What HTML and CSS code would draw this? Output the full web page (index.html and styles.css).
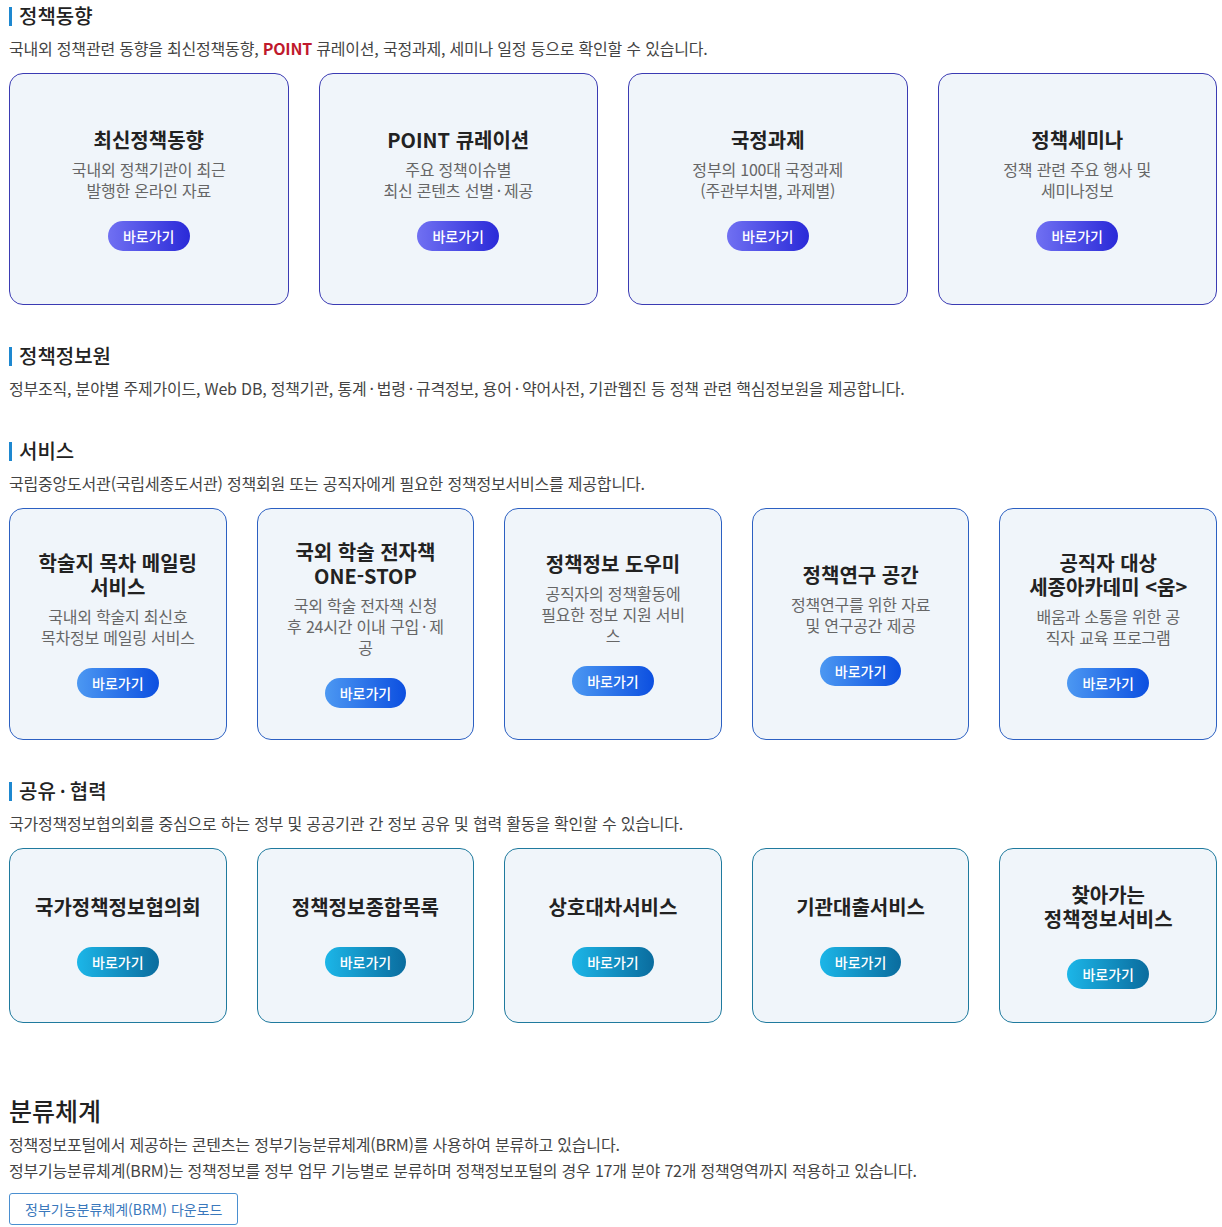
FILE: index.html
```html
<!DOCTYPE html>
<html lang="ko">
<head>
    <meta charset="UTF-8">
    <meta name="viewport" content="width=device-width, initial-scale=1">
    <title>정책정보</title>
    <link rel="stylesheet" href="styles.css">
</head>
<body>
    <div class="section">
        <h2 class="title">정책동향</h2>
        <p class="desc">국내외 정책관련 동향을 최신정책동향, <strong class="point">POINT</strong> 큐레이션, 국정과제, 세미나 일정 등으로 확인할 수 있습니다.</p>
        <ul class="cards cols-4 purple">
            <li class="card">
                <strong class="card-title">최신정책동향</strong>
                <p class="card-desc">국내외 정책기관이 최근<br>발행한 온라인 자료</p>
                <a href="#" class="go">바로가기</a>
            </li>
            <li class="card">
                <strong class="card-title">POINT 큐레이션</strong>
                <p class="card-desc">주요 정책이슈별<br>최신 콘텐츠 선별&#8201;·&#8201;제공</p>
                <a href="#" class="go">바로가기</a>
            </li>
            <li class="card">
                <strong class="card-title">국정과제</strong>
                <p class="card-desc">정부의 100대 국정과제<br>(주관부처별, 과제별)</p>
                <a href="#" class="go">바로가기</a>
            </li>
            <li class="card">
                <strong class="card-title">정책세미나</strong>
                <p class="card-desc">정책 관련 주요 행사 및<br>세미나정보</p>
                <a href="#" class="go">바로가기</a>
            </li>
        </ul>
    </div>

    <div class="section">
        <h2 class="title">정책정보원</h2>
        <p class="desc">정부조직, 분야별 주제가이드, Web DB, 정책기관, 통계&#8201;·&#8201;법령&#8201;·&#8201;규격정보, 용어&#8201;·&#8201;약어사전, 기관웹진 등 정책 관련 핵심정보원을 제공합니다.</p>
    </div>

    <div class="section">
        <h2 class="title">서비스</h2>
        <p class="desc">국립중앙도서관(국립세종도서관) 정책회원 또는 공직자에게 필요한 정책정보서비스를 제공합니다.</p>
        <ul class="cards cols-5 blue">
            <li class="card">
                <strong class="card-title">학술지 목차 메일링 서비스</strong>
                <p class="card-desc">국내외 학술지 최신호<br>목차정보 메일링 서비스</p>
                <a href="#" class="go">바로가기</a>
            </li>
            <li class="card">
                <strong class="card-title">국외 학술 전자책<br>ONE-STOP</strong>
                <p class="card-desc">국외 학술 전자책 신청<br>후 24시간 이내 구입&#8201;·&#8201;제<br>공</p>
                <a href="#" class="go">바로가기</a>
            </li>
            <li class="card">
                <strong class="card-title">정책정보 도우미</strong>
                <p class="card-desc">공직자의 정책활동에<br>필요한 정보 지원 서비<br>스</p>
                <a href="#" class="go">바로가기</a>
            </li>
            <li class="card">
                <strong class="card-title">정책연구 공간</strong>
                <p class="card-desc">정책연구를 위한 자료<br>및 연구공간 제공</p>
                <a href="#" class="go">바로가기</a>
            </li>
            <li class="card">
                <strong class="card-title">공직자 대상<br>세종아카데미 &lt;움&gt;</strong>
                <p class="card-desc">배움과 소통을 위한 공<br>직자 교육 프로그램</p>
                <a href="#" class="go">바로가기</a>
            </li>
        </ul>
    </div>

    <div class="section">
        <h2 class="title">공유&#8201;·&#8201;협력</h2>
        <p class="desc">국가정책정보협의회를 중심으로 하는 정부 및 공공기관 간 정보 공유 및 협력 활동을 확인할 수 있습니다.</p>
        <ul class="cards cols-5 teal short">
            <li class="card">
                <strong class="card-title">국가정책정보협의회</strong>
                <a href="#" class="go">바로가기</a>
            </li>
            <li class="card">
                <strong class="card-title">정책정보종합목록</strong>
                <a href="#" class="go">바로가기</a>
            </li>
            <li class="card">
                <strong class="card-title">상호대차서비스</strong>
                <a href="#" class="go">바로가기</a>
            </li>
            <li class="card">
                <strong class="card-title">기관대출서비스</strong>
                <a href="#" class="go">바로가기</a>
            </li>
            <li class="card">
                <strong class="card-title">찾아가는<br>정책정보서비스</strong>
                <a href="#" class="go">바로가기</a>
            </li>
        </ul>
    </div>

    <div class="brm">
        <h2 class="brm-title">분류체계</h2>
        <p class="brm-text">정책정보포털에서 제공하는 콘텐츠는 정부기능분류체계(BRM)를 사용하여 분류하고 있습니다.<br>정부기능분류체계(BRM)는 정책정보를 정부 업무 기능별로 분류하며 정책정보포털의 경우 17개 분야 72개 정책영역까지 적용하고 있습니다.</p>
        <a href="#" class="download">정부기능분류체계(BRM) 다운로드</a>
    </div>
</body>
</html>
```

FILE: styles.css
```css
*, *:before, *:after {
    margin: 0;
    padding: 0;
    box-sizing: border-box;
}
body {
    padding: 2px 5px 0 9px;
    font-family: "Noto Sans CJK KR", "Noto Sans", sans-serif;
    color: #222;
    background: #fff;
}
a {
    text-decoration: none;
}
ul {
    list-style: none;
}
.section {
    margin-bottom: 37px;
}
.title {
    position: relative;
    padding-left: 10px;
    font-size: 20px;
    font-weight: 500;
    line-height: 28px;
    color: #222;
}
.title:before {
    content: "";
    position: absolute;
    left: 0;
    top: 5px;
    width: 3px;
    height: 19px;
    background: #1e88d0;
}
.desc {
    margin-top: 6px;
    font-size: 16px;
    letter-spacing: -0.2px;
    line-height: 24px;
    color: #444;
}
.point {
    color: #c0192c;
    font-weight: 700;
}
.cards {
    display: grid;
    gap: 30px;
    margin-top: 13px;
}
.cols-4 {
    grid-template-columns: repeat(4, 1fr);
}
.cols-5 {
    grid-template-columns: repeat(5, 1fr);
}
.card {
    display: flex;
    flex-direction: column;
    align-items: center;
    justify-content: center;
    height: 232px;
    padding: 0 24px;
    border: 1px solid #3b3bb3;
    border-radius: 14px;
    background: #f0f5fa;
    text-align: center;
}
.short .card {
    height: 175px;
}
.card-title {
    font-size: 20px;
    font-weight: 700;
    line-height: 24px;
    color: #222;
}
.card-desc {
    margin-top: 7px;
    font-size: 16px;
    letter-spacing: -0.2px;
    line-height: 21px;
    color: #666;
}
.go {
    display: inline-block;
    margin-top: 20px;
    height: 30px;
    padding: 0 15px;
    border-radius: 15px;
    font-size: 14px;
    font-weight: 500;
    line-height: 30px;
    color: #fff;
}
.short .go {
    margin-top: 28px;
}
.purple .go {
    background: linear-gradient(to right, #7070f2, #2a2ad8);
}
.blue .card {
    border-color: #2c60c2;
}
.blue .go {
    background: linear-gradient(to right, #4c98f2, #0c4fe0);
}
.teal .card {
    border-color: #1f7a9e;
}
.teal .go {
    background: linear-gradient(to right, #1cb6e8, #0a6c9e);
}
.brm {
    margin-top: 71px;
}
.brm-title {
    font-size: 25px;
    font-weight: 500;
    line-height: 32px;
    color: #222;
}
.brm-text {
    margin-top: 5px;
    font-size: 16px;
    letter-spacing: -0.2px;
    line-height: 26px;
    color: #444;
}
.download {
    display: inline-block;
    margin-top: 10px;
    height: 32px;
    padding: 0 15px;
    border: 1px solid #4a8fd0;
    border-radius: 3px;
    font-size: 14px;
    line-height: 30px;
    color: #3a78bc;
}
```
